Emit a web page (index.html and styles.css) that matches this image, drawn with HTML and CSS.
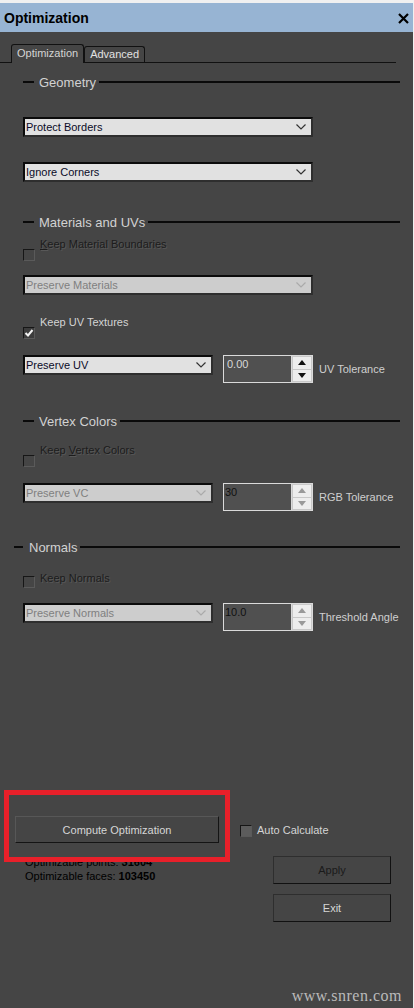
FILE: index.html
```html
<!DOCTYPE html>
<html lang="en">
<head>
<meta charset="UTF-8">
<meta name="viewport" content="width=device-width, initial-scale=1.0">
<link rel="stylesheet" href="styles.css">
<title>Optimization</title>
</head>
<body>
<div class="window">
  <div class="titlebar">
    <span class="title">Optimization</span>
    <svg class="close" width="11" height="11" viewBox="0 0 11 11"><path d="M1 1 L10 10 M10 1 L1 10" stroke="#000" stroke-width="2.2"/></svg>
  </div>

  <div class="panel">
    <div class="tabs">
      <div class="tab active">Optimization</div>
      <div class="tab">Advanced</div>
    </div>

    <div class="content">
      <!-- Geometry -->
      <div class="group-head geometry"><span class="seg"></span><span class="group-title">Geometry</span><span class="rule"></span></div>
      <div class="select full sel-borders"><span>Protect Borders</span><svg width="10" height="6" viewBox="0 0 10 6"><polyline points="0.5,0.5 5,5 9.5,0.5" fill="none" stroke="#333" stroke-width="1.2"/></svg></div>
      <div class="select full sel-corners"><span>Ignore Corners</span><svg width="10" height="6" viewBox="0 0 10 6"><polyline points="0.5,0.5 5,5 9.5,0.5" fill="none" stroke="#333" stroke-width="1.2"/></svg></div>

      <!-- Materials and UVs -->
      <div class="group-head materials"><span class="seg"></span><span class="group-title">Materials and UVs</span><span class="rule"></span></div>
      <div class="check off chk-material"><span class="box"></span><span class="check-label"><u>K</u>eep Material Boundaries</span></div>
      <div class="select full off sel-materials"><span>Preserve Materials</span><svg width="10" height="6" viewBox="0 0 10 6"><polyline points="0.5,0.5 5,5 9.5,0.5" fill="none" stroke="#aaa" stroke-width="1.2"/></svg></div>
      <div class="check chk-uv"><span class="box checked"><svg width="10" height="10" viewBox="0 0 10 10"><path d="M1.5 5 L4 7.5 L8.5 2" fill="none" stroke="#f2f2f2" stroke-width="2"/></svg></span><span class="check-label">Keep UV Textures</span></div>
      <div class="row row-uv">
        <div class="select half"><span>Preserve UV</span><svg width="10" height="6" viewBox="0 0 10 6"><polyline points="0.5,0.5 5,5 9.5,0.5" fill="none" stroke="#333" stroke-width="1.2"/></svg></div>
        <div class="spin">
          <div class="spin-field light">0.00</div>
          <div class="spin-btns">
            <span class="spin-btn"><svg width="8" height="5" viewBox="0 0 8 5"><polygon points="0,5 4,0 8,5" fill="#111"/></svg></span>
            <span class="spin-btn"><svg width="8" height="5" viewBox="0 0 8 5"><polygon points="0,0 4,5 8,0" fill="#111"/></svg></span>
          </div>
        </div>
        <span class="spin-label">UV Tolerance</span>
      </div>

      <!-- Vertex Colors -->
      <div class="group-head vertex"><span class="seg"></span><span class="group-title">Vertex Colors</span><span class="rule"></span></div>
      <div class="check off chk-vertex"><span class="box"></span><span class="check-label">Keep <u>V</u>ertex Colors</span></div>
      <div class="row row-vc">
        <div class="select half off"><span>Preserve VC</span><svg width="10" height="6" viewBox="0 0 10 6"><polyline points="0.5,0.5 5,5 9.5,0.5" fill="none" stroke="#aaa" stroke-width="1.2"/></svg></div>
        <div class="spin">
          <div class="spin-field">30</div>
          <div class="spin-btns">
            <span class="spin-btn"><svg width="8" height="5" viewBox="0 0 8 5"><polygon points="0,5 4,0 8,5" fill="#999"/></svg></span>
            <span class="spin-btn"><svg width="8" height="5" viewBox="0 0 8 5"><polygon points="0,0 4,5 8,0" fill="#999"/></svg></span>
          </div>
        </div>
        <span class="spin-label">RGB Tolerance</span>
      </div>

      <!-- Normals -->
      <div class="group-head normals"><span class="seg"></span><span class="group-title">Normals</span><span class="rule"></span></div>
      <div class="check off chk-normals"><span class="box"></span><span class="check-label">Keep Normals</span></div>
      <div class="row row-normals">
        <div class="select half off"><span>Preserve Normals</span><svg width="10" height="6" viewBox="0 0 10 6"><polyline points="0.5,0.5 5,5 9.5,0.5" fill="none" stroke="#aaa" stroke-width="1.2"/></svg></div>
        <div class="spin">
          <div class="spin-field">10.0</div>
          <div class="spin-btns">
            <span class="spin-btn"><svg width="8" height="5" viewBox="0 0 8 5"><polygon points="0,5 4,0 8,5" fill="#999"/></svg></span>
            <span class="spin-btn"><svg width="8" height="5" viewBox="0 0 8 5"><polygon points="0,0 4,5 8,0" fill="#999"/></svg></span>
          </div>
        </div>
        <span class="spin-label">Threshold Angle</span>
      </div>
    </div>

    <div class="footer">
      <div class="highlight"></div>
      <div class="foot-row">
        <button class="btn compute">Compute Optimization</button>
        <div class="check auto"><span class="box"></span><span class="check-label">Auto Calculate</span></div>
      </div>
      <div class="foot-row2">
        <div class="stats">
          <div>Optimizable points: <b>31604</b></div>
          <div>Optimizable faces: <b>103450</b></div>
        </div>
        <div class="actions">
          <button class="btn apply">Apply</button>
          <button class="btn">Exit</button>
        </div>
      </div>
    </div>

    <div class="watermark">www.snren.com</div>
  </div>
</div>
</body>
</html>
```

FILE: styles.css
```css
html, body {
  margin: 0;
  padding: 0;
  background-color: #f0f0f0;
}

body {
  font-family: "Liberation Sans", Arial, sans-serif;
  font-size: 11px;
}

.window {
  width: 413px;
  height: 1005px;
  margin-top: 3px;
  display: flex;
  flex-direction: column;
}

.titlebar {
  height: 29px;
  background-color: #97b4d3;
  display: flex;
  align-items: center;
  justify-content: space-between;
  padding: 0 4px;
}

.title {
  font-size: 14px;
  font-weight: bold;
  color: #000;
}

.close {
  margin-top: 1px;
}

.panel {
  flex: 1;
  position: relative;
  background-color: #454545;
}

/* tab strip */
.tabs {
  display: flex;
  align-items: flex-end;
  width: 396px;
  box-sizing: border-box;
  height: 19px;
  margin-top: 12px;
  padding-left: 11px;
  border-bottom: 1px solid #111;
}

.tab {
  height: 16px;
  line-height: 15px;
  padding: 0 5px;
  box-sizing: border-box;
  border: 1px solid #111;
  border-bottom: none;
  border-radius: 3px 3px 0 0;
  color: #e2e2e2;
}

.tab.active {
  height: 19px;
  line-height: 17px;
  margin-bottom: -1px;
  background-color: #454545;
  color: #d4d4d4;
  position: relative;
}

.content {
  padding: 0 13px 0 23px;
}

/* group headers */
.group-head {
  display: flex;
  align-items: center;
  height: 16px;
}

.group-head .seg {
  width: 11px;
  height: 2px;
  background-color: #0a0a0a;
}

.group-head .rule {
  flex: 1;
  height: 2px;
  background-color: #0a0a0a;
}

.group-title {
  font-size: 13px;
  color: #d2d2d2;
  margin: 0 3px 0 5px;
}

.geometry { margin-top: 11px; }
.materials { margin-top: 32px; }
.vertex { margin-top: 30px; }
.normals {
  margin-top: 28px;
  margin-left: -9px;
}
.normals .seg { width: 9px; }
.normals .group-title { margin-left: 6px; }

/* dropdowns */
.select {
  display: flex;
  align-items: center;
  height: 20px;
  box-sizing: border-box;
  border: 2px solid;
  border-color: #0b0b0b #2e2e2e #2e2e2e #0b0b0b;
  background-color: #e1e1e1;
  color: #0b0b28;
  padding: 0 5px 0 1px;
}

.select span {
  flex: 1;
}

.select.full { width: 290px; }
.select.half { width: 190px; }

.select.off {
  background-color: #cdcdcd;
  color: #7f7f7f;
}

.sel-borders { margin-top: 27px; }
.sel-corners { margin-top: 25px; }
.sel-materials { margin-top: 14px; }

/* checkboxes */
.check {
  display: flex;
  align-items: flex-start;
  gap: 5px;
}

.box {
  width: 12px;
  height: 12px;
  box-sizing: border-box;
  margin-top: 12px;
  border: 1px solid;
  border-color: #161616 #5a5a5a #5a5a5a #161616;
  background-color: #454545;
  display: flex;
  align-items: center;
  justify-content: center;
}

.box.checked {
  background-color: #3c3c3c;
}

.check-label {
  line-height: 14px;
  color: #d4d4d4;
}

.check.off .check-label {
  color: #1c1c1c;
  text-shadow: 1px 1px 0 #585858;
}

.chk-material { margin-top: 7px; }
.chk-uv { margin-top: 20px; }
.chk-vertex { margin-top: 14px; }
.chk-normals { margin-top: 16px; }
.chk-normals .box { margin-top: 5px; }

/* select + spinner rows */
.row {
  display: flex;
  align-items: flex-start;
}

.row-uv { margin-top: 16px; }
.row-vc { margin-top: 16px; }
.row-normals { margin-top: 15px; }

.spin {
  display: flex;
  width: 90px;
  height: 28px;
  box-sizing: border-box;
  margin-left: 10px;
  border: 1px solid #dadada;
}

.spin-field {
  flex: 1;
  background-color: #505050;
  border-right: 1px solid #dadada;
  padding: 2px 1px;
  line-height: 13px;
  color: #111;
}

.spin-field.light {
  padding-left: 3px;
  color: #d8d8d8;
}

.spin-btns {
  width: 20px;
  display: flex;
  flex-direction: column;
  gap: 1px;
  padding: 1px;
  box-sizing: border-box;
  background-color: #c8c8c8;
}

.spin-btn {
  flex: 1;
  background-color: #ededed;
  display: flex;
  align-items: center;
  justify-content: center;
}

.spin-label {
  align-self: center;
  margin-left: 6px;
  color: #cfcfcf;
}

/* bottom area */
.footer {
  position: relative;
  margin-top: 185px;
}

.highlight {
  position: absolute;
  left: 4px;
  top: -26px;
  width: 226px;
  height: 72px;
  box-sizing: border-box;
  border: 5px solid #e8202a;
  z-index: 2;
}

.foot-row {
  display: flex;
  align-items: center;
  padding-left: 15px;
}

.btn {
  font-family: "Liberation Sans", Arial, sans-serif;
  font-size: 11px;
  background-color: #454545;
  color: #d6d6d6;
  border: 1px solid;
  border-color: #2e2e2e #111 #111 #2e2e2e;
  padding: 0;
  height: 28px;
}

.btn.compute {
  width: 204px;
  height: 27px;
  border-color: #575757 #141414 #141414 #575757;
}

.btn.apply {
  color: #1a1a1a;
}

.auto {
  margin-left: 21px;
  align-items: center;
}

.auto .box {
  margin-top: 3px;
  background-color: #5c5c5c;
}

.foot-row2 {
  display: flex;
  justify-content: space-between;
  margin-top: 12px;
}

.stats {
  padding-left: 25px;
  line-height: 14px;
  color: #000;
}

.actions {
  display: flex;
  flex-direction: column;
  gap: 10px;
  width: 118px;
  margin-top: 1px;
  margin-right: 22px;
}

.watermark {
  position: absolute;
  right: 11px;
  bottom: 4px;
  font-family: "Liberation Serif", "Times New Roman", serif;
  font-size: 16px;
  line-height: 16px;
  letter-spacing: 0.5px;
  color: #bababa;
}
```
